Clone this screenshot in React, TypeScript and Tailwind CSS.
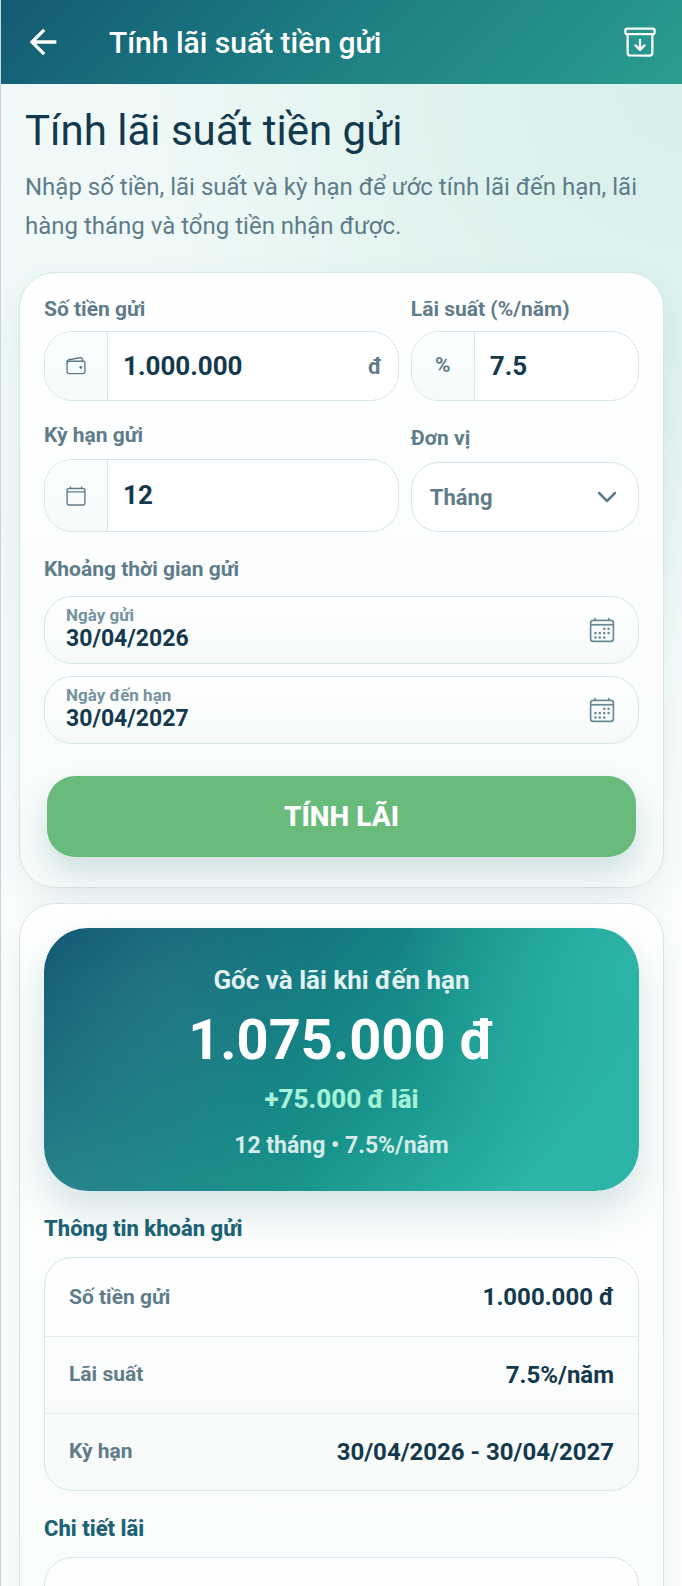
import { useId, useState } from "react";
import type { ReactNode } from "react";
import { IoArchiveOutline, IoCalendarClearOutline, IoCalendarOutline, IoWalletOutline } from "react-icons/io5";
import { MdArrowBack } from "react-icons/md";

function Label({ htmlFor, children }: { htmlFor: string; children: ReactNode }) {
  return (
    <label htmlFor={htmlFor} className="block text-[21px] leading-6 font-bold text-[#5f7c8a]">
      {children}
    </label>
  );
}

interface FieldProps {
  label: string;
  value: string;
  onChange: (value: string) => void;
  icon: ReactNode;
  suffix?: string;
  tall?: boolean;
}

function Field({ label, value, onChange, icon, suffix, tall = false }: FieldProps) {
  const id = useId();
  return (
    <div className={`flex min-w-0 flex-col ${tall ? "gap-3" : "gap-2.5"}`}>
      <Label htmlFor={id}>{label}</Label>
      <div
        className={`flex overflow-hidden rounded-[28px] border border-[#d5e7e6] bg-white ${tall ? "h-[73px]" : "h-[70px]"}`}
      >
        <span className="flex w-[63px] shrink-0 items-center justify-center border-r border-[#d9e9e8] bg-linear-to-b from-[#fcfefe] to-[#f6fafa] text-[21px] font-bold text-[#5f7c8a]">
          {icon}
        </span>
        <input
          id={id}
          value={value}
          inputMode="decimal"
          onChange={(e) => onChange(e.target.value)}
          className="min-w-0 flex-1 bg-transparent pl-[15px] text-[26px] font-bold text-[#14394c] outline-none"
        />
        {suffix && <span className="self-center pr-4 text-[22px] font-bold text-[#5f7c8a]">{suffix}</span>}
      </div>
    </div>
  );
}

function DateField({ label, value, onChange }: { label: string; value: string; onChange: (value: string) => void }) {
  const id = useId();
  return (
    <div className="flex h-[68px] items-center rounded-[28px] border border-[#d5e7e6] bg-linear-to-b from-white to-[#f5faf9] pr-[22px] pl-[21px]">
      <div className="flex min-w-0 flex-1 flex-col pb-0.5">
        <label htmlFor={id} className="text-[17px] leading-5 font-bold text-[#76929e]">
          {label}
        </label>
        <input
          id={id}
          value={value}
          onChange={(e) => onChange(e.target.value)}
          className="h-7 w-full bg-transparent text-[23px] leading-7 font-bold text-[#14394c] outline-none"
        />
      </div>
      <button type="button" aria-label={label} className="text-[#6b8b98]">
        <IoCalendarOutline className="size-7" />
      </button>
    </div>
  );
}

const cardClass =
  "rounded-[36px] border border-[#d5e7e6] bg-linear-to-b from-white to-[#f8fcfb] px-6 shadow-[0_16px_40px_rgba(18,92,104,0.09)]";

const details = [
  ["Số tiền gửi", "1.000.000 đ"],
  ["Lãi suất", "7.5%/năm"],
  ["Kỳ hạn", "30/04/2026 - 30/04/2027"],
];

export default function App() {
  const [amount, setAmount] = useState("1.000.000");
  const [rate, setRate] = useState("7.5");
  const [term, setTerm] = useState("12");
  const [unit, setUnit] = useState("Tháng");
  const [start, setStart] = useState("30/04/2026");
  const [end, setEnd] = useState("30/04/2027");

  return (
    <div className="flex h-screen flex-col overflow-hidden border-l border-[#c6d6dd] font-['Roboto','Noto_Sans',sans-serif]">
      <header className="flex h-[84px] shrink-0 items-center bg-linear-135 from-[#145a74] via-[#1e7f83] to-[#2a9d8f] pr-6 pl-[22px] text-white">
        <button type="button" aria-label="Quay lại">
          <MdArrowBack className="size-10" />
        </button>
        <div className="flex-1 pl-[46px] text-[30px] font-medium">Tính lãi suất tiền gửi</div>
        <button type="button" aria-label="Lưu trữ">
          <IoArchiveOutline className="size-9" />
        </button>
      </header>

      <main className="flex-1 overflow-y-auto bg-[radial-gradient(circle_at_100%_0%,#d8efec_0px,#e0f3ef_260px,transparent_560px),linear-gradient(180deg,#eff9f8_0px,#f2faf9_400px,#ffffff_900px)] px-[18px] [scrollbar-width:none]">
        <section className="px-1.5 pt-[21px]">
          <h1 className="text-[42px] leading-[52px] text-[#14394c]">Tính lãi suất tiền gửi</h1>
          <p className="mt-[11px] text-[24px] leading-[39px] text-[#5f7c8a]">
            Nhập số tiền, lãi suất và kỳ hạn để ước tính lãi đến hạn, lãi hàng tháng và tổng tiền nhận được.
          </p>
        </section>

        <form className={`${cardClass} mt-[26px] pt-6 pb-[30px]`} onSubmit={(e) => e.preventDefault()}>
          <div className="grid grid-cols-[14fr_9fr] items-end gap-x-3 gap-y-[22px]">
            <Field
              label="Số tiền gửi"
              value={amount}
              onChange={setAmount}
              icon={<IoWalletOutline className="size-[22px]" />}
              suffix="đ"
            />
            <Field label="Lãi suất (%/năm)" value={rate} onChange={setRate} icon="%" />
            <Field
              label="Kỳ hạn gửi"
              value={term}
              onChange={setTerm}
              icon={<IoCalendarClearOutline className="size-[22px]" />}
              tall
            />
            <div className="flex min-w-0 flex-col gap-3">
              <Label htmlFor="unit">Đơn vị</Label>
              <div className="grid h-[70px] items-center">
                <select
                  id="unit"
                  value={unit}
                  onChange={(e) => setUnit(e.target.value)}
                  className="col-start-1 row-start-1 h-full w-full appearance-none rounded-[28px] border border-[#d5e7e6] bg-white px-[18px] text-[22px] font-bold text-[#5f7c8a] outline-none"
                >
                  <option>Tháng</option>
                </select>
                <svg
                  viewBox="0 0 20 12"
                  className="pointer-events-none col-start-1 row-start-1 mr-[22px] h-3 w-5 justify-self-end text-[#5f7c8a]"
                  fill="none"
                  stroke="currentColor"
                  strokeWidth="2.5"
                  strokeLinecap="round"
                  strokeLinejoin="round"
                >
                  <path d="M2 2l8 8 8-8" />
                </svg>
              </div>
            </div>
          </div>

          <fieldset className="mt-[23px]">
            <legend className="text-[21px] leading-7 font-bold text-[#5f7c8a]">Khoảng thời gian gửi</legend>
            <div className="flex flex-col gap-3 pt-[13px]">
              <DateField label="Ngày gửi" value={start} onChange={setStart} />
              <DateField label="Ngày đến hạn" value={end} onChange={setEnd} />
            </div>
          </fieldset>

          <div className="mt-8 px-[3px]">
            <button
              type="submit"
              className="h-[81px] w-full rounded-[28px] bg-[#69bb7c] text-[28px] font-extrabold text-white shadow-[0_16px_32px_rgba(18,92,104,0.18)]"
            >
              TÍNH LÃI
            </button>
          </div>
        </form>

        <section className={`${cardClass} mt-[15px] pt-6`}>
          <div className="flex h-[263px] flex-col items-center rounded-[44px] bg-[radial-gradient(circle_at_20%_18%,rgba(255,255,255,0.06),transparent_30%),radial-gradient(circle_at_0%_100%,rgba(255,255,255,0.09),transparent_40%),radial-gradient(circle_at_100%_15%,#2cb5a7_0px,transparent_240px),linear-gradient(135deg,#0f5672_0%,#17908a_56%,#2cb5a7_86%,#2cb5a7_100%)] pt-9 font-bold shadow-[0_18px_40px_rgba(18,92,104,0.18)]">
            <p className="text-[26px] leading-8 text-[#e2f1f1]">Gốc và lãi khi đến hạn</p>
            <p className="mt-2 text-[56px] leading-[72px] text-white">1.075.000 đ</p>
            <p className="mt-[7px] text-[26px] leading-8 font-extrabold text-[#a5f2d8]">+75.000 đ lãi</p>
            <p className="mt-[17px] text-[23px] leading-7 text-[#d5ecea]">12 tháng • 7.5%/năm</p>
          </div>

          <h2 className="mt-6 text-[22px] leading-7 font-extrabold text-[#1d6274]">Thông tin khoản gửi</h2>
          <div className="mt-[14px] rounded-[28px] border border-[#d5e7e6] bg-linear-to-b from-white to-[#f6faf9] pt-px">
            <table className="w-full">
              <tbody>
                {details.map(([name, value]) => (
                  <tr key={name} className="h-[77px] border-b border-[#e0eeec] last:border-b-0">
                    <th scope="row" className="pl-6 text-left text-[21px] font-bold text-[#5f7c8a]">
                      {name}
                    </th>
                    <td className="pr-6 text-right text-[24px] font-bold text-[#14394c]">{value}</td>
                  </tr>
                ))}
              </tbody>
            </table>
          </div>

          <h2 className="mt-6 text-[22px] leading-7 font-extrabold text-[#1d6274]">Chi tiết lãi</h2>
          <div className="mt-[14px] h-[233px] rounded-[28px] border border-[#d5e7e6] bg-linear-to-b from-white to-[#f6faf9]" />
        </section>
      </main>
    </div>
  );
}
